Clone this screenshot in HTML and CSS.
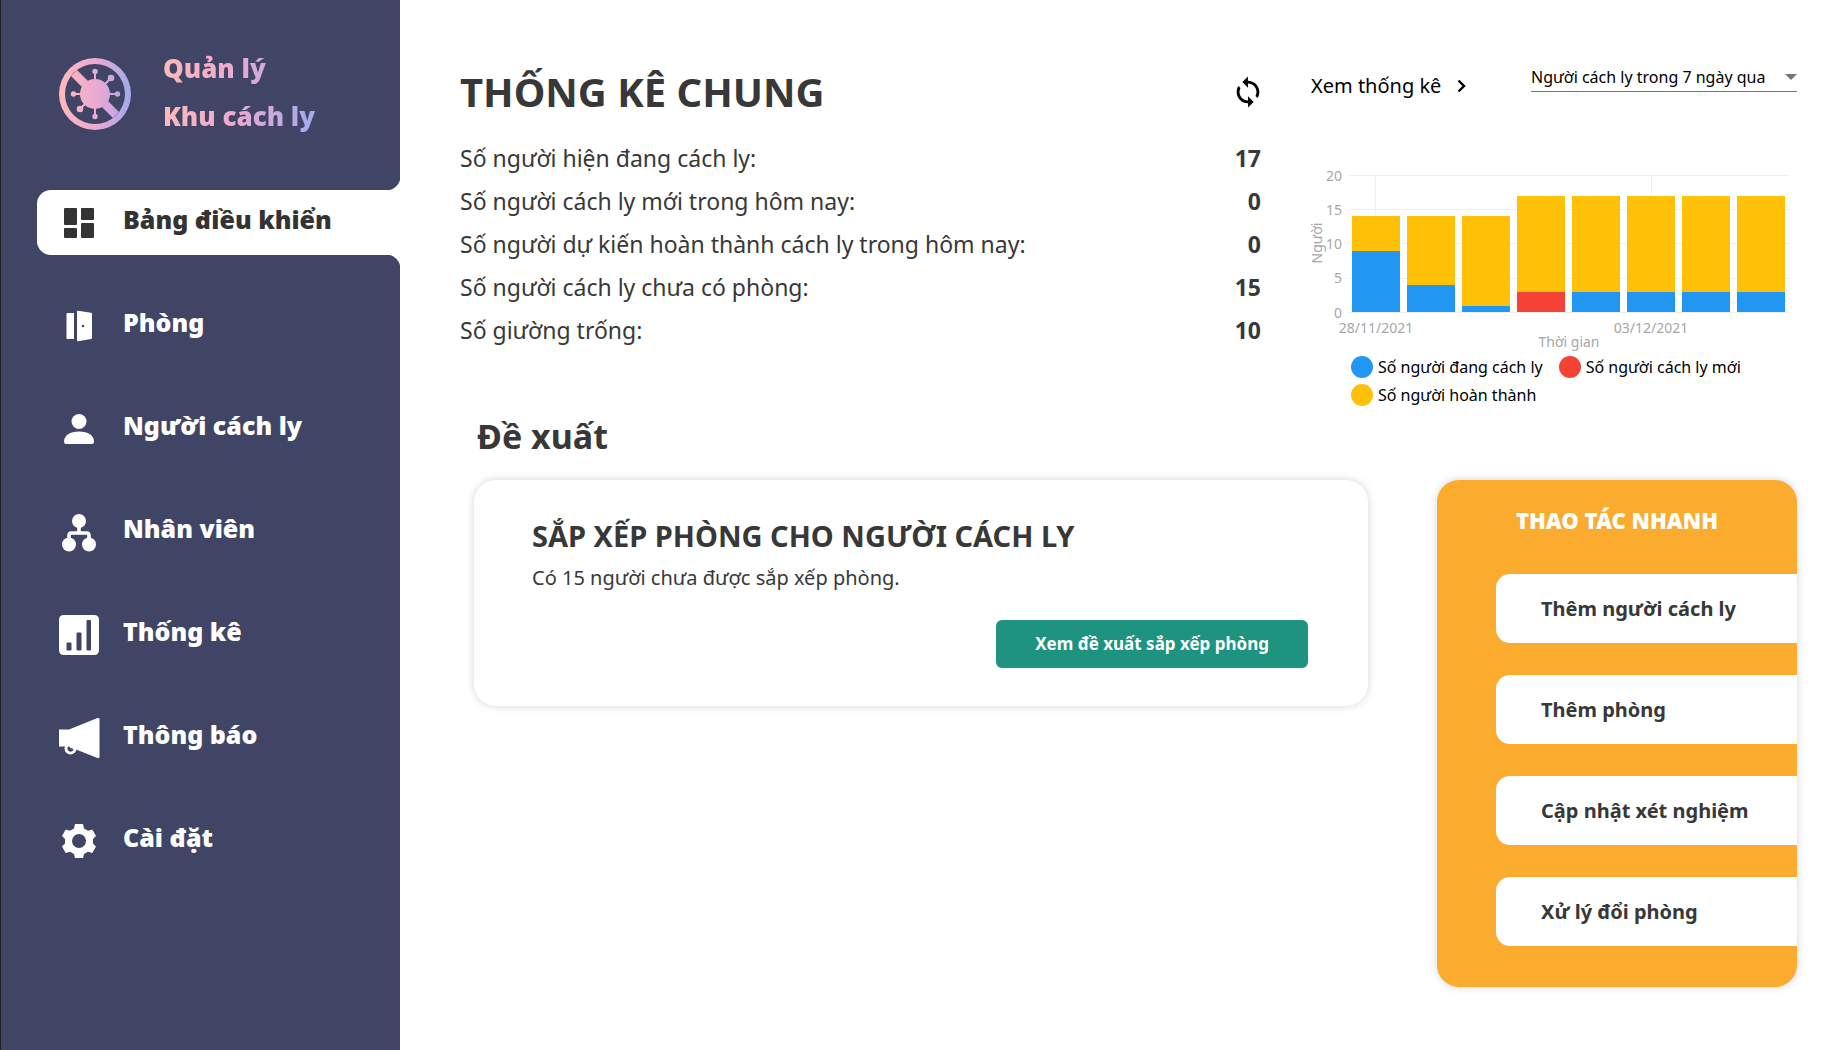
FILE: index.html
```html
<!DOCTYPE html>
<html lang="vi">
<head>
<meta charset="utf-8">
<meta name="viewport" content="width=device-width, initial-scale=1">
<title>Quản lý Khu cách ly</title>
<link rel="stylesheet" href="styles.css">
</head>
<body>
<aside class="sidebar">
  <div class="brand">
    <svg class="brand-icon" viewBox="0 0 72 72" aria-hidden="true">
      <defs>
        <linearGradient id="brandFill" gradientUnits="userSpaceOnUse" x1="0" y1="0" x2="72" y2="0">
          <stop offset="0" stop-color="#ffb9b9"/>
          <stop offset="0.55" stop-color="#e9a9d2"/>
          <stop offset="1" stop-color="#a2a9ef"/>
        </linearGradient>
      </defs>
      <g fill="url(#brandFill)">
        <path fill-rule="evenodd" d="M36 0a36 36 0 1 0 0 72a36 36 0 1 0 0-72zM36 6a30 30 0 1 1 0 60a30 30 0 1 1 0-60z"/>
        <path d="M18 12L29 23 23 29 12 18zM49 43L60 54 54 60 43 49z"/>
        <circle cx="36" cy="36" r="15"/>
        <path d="M35 12h2v12h-2zM35 48h2v12h-2zM12 35h12v2h-12zM48 35h12v2h-12zM45.500 25L51 19.500l1.500 1.500L47 26.500zM25 45.500L26.500 47 21 52.500 19.500 51z"/>
        <circle cx="36" cy="13.500" r="2.700"/><circle cx="36" cy="58.500" r="2.700"/>
        <circle cx="14.500" cy="36" r="2.700"/><circle cx="58.500" cy="36" r="2.700"/>
        <circle cx="52" cy="20" r="3.300"/><circle cx="21" cy="51" r="3.300"/>
      </g>
    </svg>
    <div class="brand-name">Quản lý<br>Khu cách ly</div>
  </div>
  <nav class="nav">
    <a class="nav-item active" href="#" aria-current="page">
      <svg class="nav-icon" viewBox="0 0 40 40" aria-hidden="true"><path d="M6 5h11a1 1 0 0 1 1 1v15a1 1 0 0 1-1 1H6a1 1 0 0 1-1-1V6a1 1 0 0 1 1-1zM6 25h11a1 1 0 0 1 1 1v8a1 1 0 0 1-1 1H6a1 1 0 0 1-1-1v-8a1 1 0 0 1 1-1zM23 5h11a1 1 0 0 1 1 1v10a1 1 0 0 1-1 1H23a1 1 0 0 1-1-1V6a1 1 0 0 1 1-1zM23 20h11a1 1 0 0 1 1 1v13a1 1 0 0 1-1 1H23a1 1 0 0 1-1-1V21a1 1 0 0 1 1-1z"/></svg>
      <span>Bảng điều khiển</span>
    </a>
    <a class="nav-item" href="#">
      <svg class="nav-icon" viewBox="0 0 40 40" aria-hidden="true"><path fill-rule="evenodd" d="M8.500 7H15v26H8.500a1 1 0 0 1-1-1V8a1 1 0 0 1 1-1zM18 5.500a.8.800 0 0 1 1-.8L32 6.800a1 1 0 0 1 1 1V32a1 1 0 0 1-1 1L19 35.300a.8.800 0 0 1-1-.8zM24 18.700a1.200 1.200 0 1 0 0 2.600a1.200 1.200 0 1 0 0-2.600z"/></svg>
      <span>Phòng</span>
    </a>
    <a class="nav-item" href="#">
      <svg class="nav-icon" viewBox="0 0 40 40" aria-hidden="true"><circle cx="20" cy="12.500" r="7.500"/><path d="M5 32.500C5 26.500 11 22.500 20 22.500S35 26.500 35 32.500Q35 35 33 35H7Q5 35 5 32.500z"/></svg>
      <span>Người cách ly</span>
    </a>
    <a class="nav-item" href="#">
      <svg class="nav-icon" viewBox="0 0 40 40" aria-hidden="true"><circle cx="20" cy="9" r="7"/><circle cx="10" cy="32.500" r="7"/><circle cx="30" cy="32.500" r="7"/><path d="M20 15v6M10 28v-4.500q0-2.500 2.500-2.500h15q2.500 0 2.500 2.500V28" fill="none" stroke="currentColor" stroke-width="3.600"/></svg>
      <span>Nhân viên</span>
    </a>
    <a class="nav-item" href="#">
      <svg class="nav-icon" viewBox="0 0 40 40" aria-hidden="true"><path fill-rule="evenodd" d="M5 0h30q5 0 5 5v30q0 5-5 5H5q-5 0-5-5V5q0-5 5-5zM8.500 27.500q-1 0-1 1V34.500q0 1 1 1h3q1 0 1-1v-6q0-1-1-1zM18.500 17.500q-1 0-1 1v16q0 1 1 1h3q1 0 1-1v-16q0-1-1-1zM28.500 5q-1 0-1 1v28.500q0 1 1 1h2.500q1 0 1-1V6q0-1-1-1z"/></svg>
      <span>Thống kê</span>
    </a>
    <a class="nav-item" href="#">
      <svg class="nav-icon" viewBox="0 0 40 40" aria-hidden="true"><path d="M0 11.500h10L38.500 0q2-.5 2 1v38q0 1.500-2 1L17 31.500H13L10 28.500H0z"/><circle cx="11.500" cy="30.500" r="4.500" fill="none" stroke="currentColor" stroke-width="3"/><path class="nav-icon-hole" d="M9 29l5.500 2q-1 2.500-3 2.500t-2.500-2z"/></svg>
      <span>Thông báo</span>
    </a>
    <a class="nav-item" href="#">
      <svg class="nav-icon" viewBox="0 0 40 40" aria-hidden="true"><path fill-rule="evenodd" d="M16 3h8l1 4.500 4 2.300 4.300-1.400 3.700 6.600-3 3v4.500l3 3-3.700 6.600-4.300-1.400-4 2.300-1 4h-8l-1-4-4-2.300-4.300 1.400L3 25.500l3-3V18l-3-3 3.700-6.600L11 9.800l4-2.300zM20 13a7 7 0 1 0 0 14a7 7 0 1 0 0-14z"/></svg>
      <span>Cài đặt</span>
    </a>
  </nav>
</aside>

<main class="main">
  <div class="overview">
    <section class="stats">
      <header class="stats-head">
        <h1>THỐNG KÊ CHUNG</h1>
        <button class="icon-button" type="button" aria-label="Làm mới">
          <svg viewBox="0 0 24 24" aria-hidden="true"><path d="M12 4V1L8 5l4 4V6c3.310 0 6 2.690 6 6 0 1.010-.25 1.970-.7 2.800l1.460 1.460C19.540 15.030 20 13.570 20 12c0-4.420-3.580-8-8-8zm0 14c-3.310 0-6-2.690-6-6 0-1.010.25-1.970.7-2.800L5.240 7.740C4.460 8.970 4 10.430 4 12c0 4.420 3.580 8 8 8v3l4-4-4-4v3z"/></svg>
        </button>
      </header>
      <dl class="stats-list">
        <div><dt>Số người hiện đang cách ly:</dt><dd>17</dd></div>
        <div><dt>Số người cách ly mới trong hôm nay:</dt><dd>0</dd></div>
        <div><dt>Số người dự kiến hoàn thành cách ly trong hôm nay:</dt><dd>0</dd></div>
        <div><dt>Số người cách ly chưa có phòng:</dt><dd>15</dd></div>
        <div><dt>Số giường trống:</dt><dd>10</dd></div>
      </dl>
    </section>

    <section class="trend">
      <div class="trend-head">
        <a class="trend-link" href="#">Xem thống kê
          <svg viewBox="0 0 9 14" aria-hidden="true"><path d="M1.500 1.500L7 7l-5.500 5.500" fill="none" stroke="currentColor" stroke-width="2.400"/></svg>
        </a>
        <div class="picker">
          <select aria-label="Loại biểu đồ">
            <option>Người cách ly trong 7 ngày qua</option>
          </select>
          <svg viewBox="0 0 12 6" aria-hidden="true"><path d="M0 0h12L6 6z"/></svg>
        </div>
      </div>
      <svg class="chart" viewBox="0 0 486 189" role="img" aria-label="Người cách ly trong 7 ngày qua">
        <g class="grid">
          <path d="M37 11.500H478M37 45.500H478M37 79.500H478M37 114.500H478M37 148.500H478M64.500 11V148M340.500 11V148"/>
        </g>
        <g class="done">
          <rect x="41" y="52" width="48" height="35"/>
          <rect x="96" y="52" width="48" height="69"/>
          <rect x="151" y="52" width="48" height="90"/>
          <rect x="206" y="32" width="48" height="96"/>
          <rect x="261" y="32" width="48" height="96"/>
          <rect x="316" y="32" width="48" height="96"/>
          <rect x="371" y="32" width="48" height="96"/>
          <rect x="426" y="32" width="48" height="96"/>
        </g>
        <g class="current">
          <rect x="41" y="87" width="48" height="61"/>
          <rect x="96" y="121" width="48" height="27"/>
          <rect x="151" y="142" width="48" height="6"/>
          <rect x="261" y="128" width="48" height="20"/>
          <rect x="316" y="128" width="48" height="20"/>
          <rect x="371" y="128" width="48" height="20"/>
          <rect x="426" y="128" width="48" height="20"/>
        </g>
        <rect class="fresh" x="206" y="128" width="48" height="20"/>
        <g class="tick-y">
          <text x="31" y="17">20</text>
          <text x="31" y="51">15</text>
          <text x="31" y="85">10</text>
          <text x="31" y="119">5</text>
          <text x="31" y="154">0</text>
        </g>
        <g class="tick-x">
          <text x="65" y="169">28/11/2021</text>
          <text x="340" y="169">03/12/2021</text>
          <text x="258" y="183">Thời gian</text>
          <text transform="translate(11 79) rotate(-90)">Người</text>
        </g>
      </svg>
      <ul class="legend">
        <li class="key-current">Số người đang cách ly</li>
        <li class="key-fresh">Số người cách ly mới</li>
        <li class="key-done">Số người hoàn thành</li>
      </ul>
    </section>
  </div>

  <div class="work">
    <section class="suggest">
      <h2>Đề xuất</h2>
      <article class="card">
        <h3>SẮP XẾP PHÒNG CHO NGƯỜI CÁCH LY</h3>
        <p>Có 15 người chưa được sắp xếp phòng.</p>
        <button class="primary" type="button">Xem đề xuất sắp xếp phòng</button>
      </article>
    </section>
    <section class="quick">
      <h2>THAO TÁC NHANH</h2>
      <button type="button">Thêm người cách ly</button>
      <button type="button">Thêm phòng</button>
      <button type="button">Cập nhật xét nghiệm</button>
      <button type="button">Xử lý đổi phòng</button>
    </section>
  </div>
</main>
</body>
</html>
```
FILE: styles.css
```css
* {
  box-sizing: border-box;
}

body {
  margin: 0;
  min-height: 100vh;
  display: grid;
  grid-template-columns: 400px minmax(0, 1fr);
  background: #fff;
  color: #383838;
  font-family: "Noto Sans", "Open Sans", sans-serif;
}

h1,
h2,
h3,
p,
dl,
dd,
ul {
  margin: 0;
  padding: 0;
}

button,
select {
  font-family: inherit;
  color: inherit;
  border: 0;
  background: none;
  padding: 0;
}

/* Sidebar */
.sidebar {
  background: #404566;
  border-left: 1px solid #1e1e1e;
  color: #fff;
}

.brand {
  display: flex;
  align-items: center;
  gap: 32px;
  padding: 44px 0 0 58px;
}

.brand-icon {
  width: 72px;
  height: 72px;
  margin-top: 4px;
}

.brand-name {
  font-size: 26px;
  line-height: 48px;
  font-weight: 900;
  color: transparent;
  background: linear-gradient(90deg, #ffb9b9, #e9a9d2 50%, #a2a9ef);
  -webkit-background-clip: text;
  background-clip: text;
}

.nav {
  display: flex;
  flex-direction: column;
  gap: 38px;
  margin-top: 50px;
  padding-left: 36px;
}

.nav-item {
  position: relative;
  display: flex;
  align-items: center;
  gap: 24px;
  height: 65px;
  padding-left: 22px;
  border-radius: 14px 0 0 14px;
  color: #fff;
  font-size: 25px;
  line-height: 32px;
  font-weight: 900;
  text-decoration: none;
}

.nav-item span {
  padding-bottom: 7px;
}

.nav-icon {
  width: 40px;
  height: 40px;
  fill: currentColor;
  overflow: visible;
}

.nav-icon-hole {
  fill: #404566;
}

.nav-item.active {
  background: #fff;
  color: #333;
}

.nav-item.active::before,
.nav-item.active::after {
  content: "";
  position: absolute;
  right: 0;
  width: 14px;
  height: 14px;
}

.nav-item.active::before {
  bottom: 100%;
  background: radial-gradient(circle at 0 0, transparent 14px, #fff 15px);
}

.nav-item.active::after {
  top: 100%;
  background: radial-gradient(circle at 0 100%, transparent 14px, #fff 15px);
}

/* Main area */
.main {
  padding: 64px 45px 40px 60px;
}

.overview {
  display: grid;
  grid-template-columns: minmax(0, 1fr) 486px;
  gap: 50px;
}

.stats-head {
  display: flex;
  justify-content: space-between;
  align-items: center;
  height: 56px;
}

.stats-head h1 {
  font-size: 40px;
  line-height: 56px;
}

.icon-button {
  width: 34px;
  height: 34px;
  margin-right: -4px;
  cursor: pointer;
}

.icon-button svg {
  display: block;
  fill: #000;
}

.stats-list {
  margin-top: 17px;
  font-size: 23px;
  line-height: 43px;
}

.stats-list div {
  display: flex;
  justify-content: space-between;
}

.stats-list dd {
  font-weight: 700;
}

.trend {
  color: #000;
}

.trend-head {
  display: flex;
  justify-content: space-between;
  align-items: flex-start;
  height: 100px;
}

.trend-link {
  display: flex;
  align-items: center;
  gap: 16px;
  margin-top: 8px;
  color: #000;
  font-size: 20px;
  line-height: 28px;
  text-decoration: none;
}

.trend-link svg {
  width: 9px;
  height: 14px;
}

.picker {
  display: grid;
  align-items: center;
  width: 266px;
  height: 28px;
  padding-bottom: 2px;
  border-bottom: 1px solid #767676;
}

.picker select,
.picker svg {
  grid-area: 1 / 1;
}

.picker select {
  appearance: none;
  width: 100%;
  font-size: 16px;
  line-height: 24px;
}

.picker svg {
  justify-self: end;
  width: 12px;
  height: 6px;
  fill: #757575;
  pointer-events: none;
}

.chart {
  display: block;
  width: 100%;
  overflow: visible;
  font-size: 14px;
}

.grid {
  stroke: #efefef;
  stroke-width: 1;
}

.done {
  fill: #ffc107;
}

.current {
  fill: #2196f3;
}

.fresh {
  fill: #f44336;
}

.tick-y,
.tick-x {
  fill: #a6a6a6;
}

.tick-y {
  text-anchor: end;
}

.tick-x {
  text-anchor: middle;
}

.legend {
  display: flex;
  flex-wrap: wrap;
  column-gap: 16px;
  padding-left: 40px;
  font-size: 16px;
  line-height: 28px;
  list-style: none;
}

.legend li {
  display: flex;
  align-items: center;
  gap: 5px;
}

.legend li::before {
  content: "";
  width: 22px;
  height: 22px;
  border-radius: 50%;
}

.key-current::before {
  background: #2196f3;
}

.key-fresh::before {
  background: #f44336;
}

.key-done::before {
  background: #ffc107;
}

.work {
  display: grid;
  grid-template-columns: minmax(0, 1fr) 360px;
  align-items: start;
  gap: 69px;
  margin-top: 3px;
  padding-left: 14px;
}

.suggest h2 {
  padding-left: 3px;
  font-size: 34px;
  line-height: 48px;
}

.card {
  display: flex;
  flex-direction: column;
  margin-top: 20px;
  padding: 36px 60px 38px 58px;
  border-radius: 22px;
  box-shadow: 0 0 9px rgba(0, 0, 0, 0.17);
}

.card h3 {
  font-size: 29px;
  line-height: 40px;
}

.card p {
  margin-top: 8px;
  font-size: 20px;
  line-height: 28px;
}

.primary {
  align-self: flex-end;
  margin-top: 28px;
  padding: 0 39px;
  border-radius: 6px;
  background: #1e9480;
  color: #fff;
  font-size: 17px;
  line-height: 48px;
  font-weight: 700;
}

.quick {
  display: flex;
  flex-direction: column;
  gap: 32px;
  margin-top: 68px;
  padding: 24px 0 41px 59px;
  border-radius: 22px;
  background: #fbac2e;
  box-shadow: 0 0 9px rgba(0, 0, 0, 0.17);
}

.quick h2 {
  margin-bottom: 6px;
  padding-right: 59px;
  color: #fff;
  font-size: 22px;
  line-height: 32px;
  font-weight: 900;
  text-align: center;
}

.quick button {
  height: 69px;
  padding-left: 45px;
  border-radius: 14px 0 0 14px;
  background: #fff;
  font-size: 20px;
  font-weight: 700;
  text-align: left;
}
```
